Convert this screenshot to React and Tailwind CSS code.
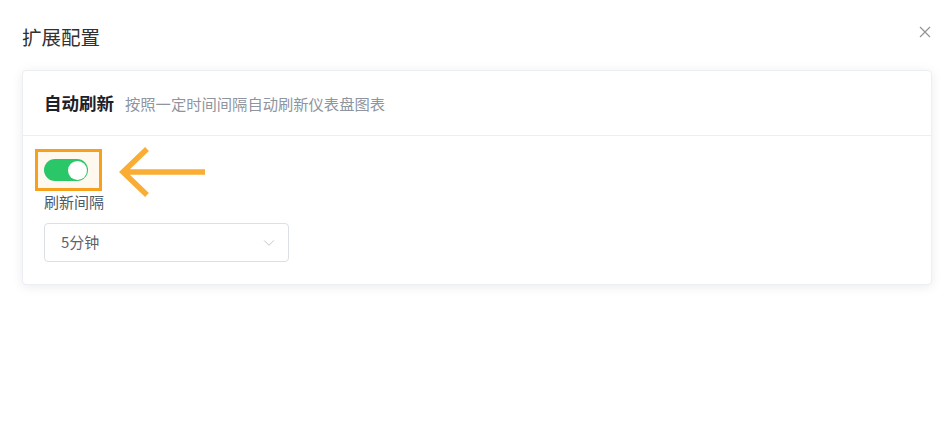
import { ChevronDown } from "lucide-react";

const font = { fontFamily: '"Noto Sans CJK SC", "Noto Sans", sans-serif' };

export default function App() {
  return (
    <div className="w-[951px] h-[437px] bg-white relative" style={font}>
      <div className="flex items-start justify-between pl-[22px] pr-[20px] pt-[22px] h-[70px]">
        <h2 className="text-[19.5px] leading-[30px] text-[#303133]">扩展配置</h2>
        <svg width="12" height="12" viewBox="0 0 12 12" className="mt-[4px]">
          <path d="M1 1 L11 11 M11 1 L1 11" stroke="#909399" strokeWidth="1.2" fill="none" />
        </svg>
      </div>

      <div className="mx-[22px] w-[910px] rounded-[4px] border border-[#ebeef5] bg-white shadow-[0_2px_12px_0_rgba(0,0,0,0.08)]">
        <div className="flex items-center gap-[10px] px-[21px] h-[65px] border-b border-[#ebeef5]">
          <span className="text-[17.5px] font-bold text-[#1d2129]">自动刷新</span>
          <span className="text-[15.3px] text-[#8f959e] mt-[1px] ml-[1px]">按照一定时间间隔自动刷新仪表盘图表</span>
        </div>

        <div className="px-[12px] pt-[13px] pb-[22px]">
          <div className="flex items-center h-[42px]">
            <div className="w-[67px] h-[42px] border-[3px] border-[#f7a01e] bg-[#fff8ef] flex items-center pl-[6px]">
              <div className="w-[44px] h-[22px] rounded-full bg-[#2ac769] flex items-center justify-end pr-[1.5px]">
                <div className="w-[19px] h-[19px] rounded-full bg-white" />
              </div>
            </div>
            <svg width="90" height="54" viewBox="0 0 90 54" className="ml-[15px] mt-[-2px] mb-[-10px] shrink-0">
              <path
                d="M88 25 H7 M30 2 L6 25 L30 48"
                fill="none"
                stroke="#f9ad35"
                strokeWidth="5.5"
              />
            </svg>
          </div>
          <div className="pl-[9px]">
            <div className="text-[15px] leading-[22px] text-[#4e5969]">刷新间隔</div>
            <div className="mt-[10px] w-[245px] h-[39px] border border-[#dcdfe6] rounded-[4px] flex items-center justify-between pl-[16px] pr-[10px]">
              <span className="text-[15px] text-[#606266]">5分钟</span>
              <ChevronDown className="w-[18px] h-[18px] text-[#c0c4cc]" strokeWidth={1.3} />
            </div>
          </div>
        </div>
      </div>
    </div>
  );
}
